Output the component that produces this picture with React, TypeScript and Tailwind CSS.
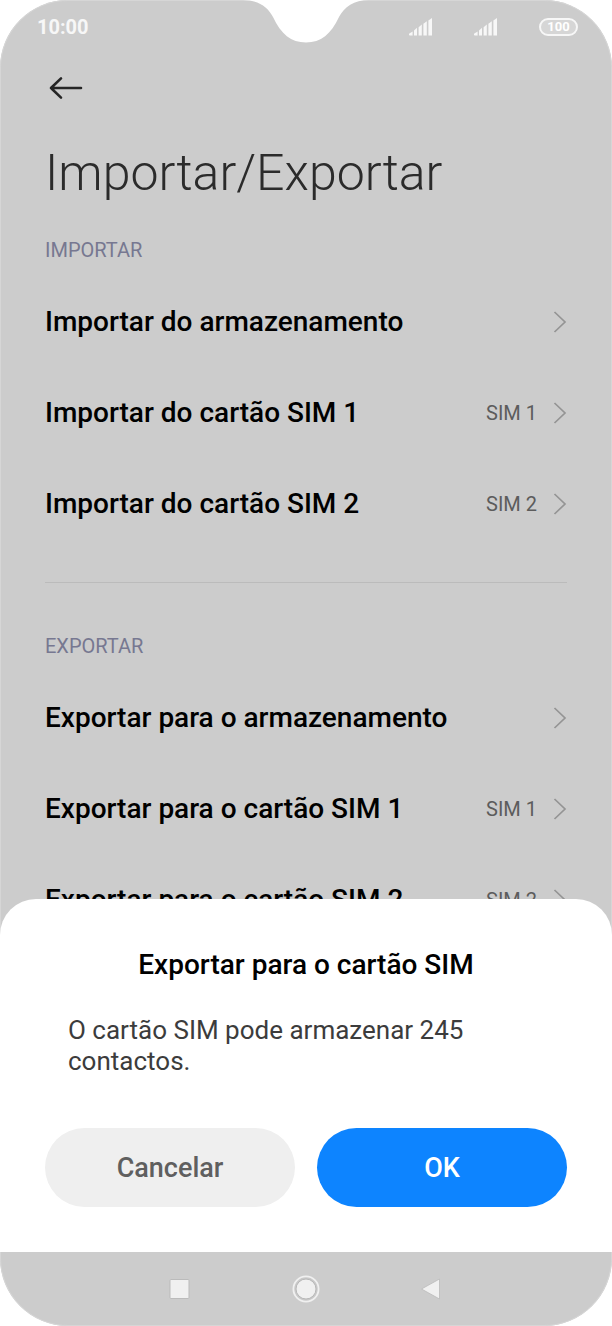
interface RowProps {
  title: string;
  value?: string;
}

const Chevron = () => (
  <svg width="14" height="22" viewBox="0 0 14 22" fill="none" stroke="#949494" strokeWidth="1.7">
    <path d="M1.5 1 L12 11 L1.5 21" />
  </svg>
);

const Row = ({ title, value }: RowProps) => {
  return (
    <li>
      <button type="button" className="flex h-[91px] w-full items-center text-left">
        <span className="grow text-[28px] leading-9 font-medium text-black">{title}</span>
        {value && <span className="mr-4 text-xl leading-6 text-[#5c5c5c]">{value}</span>}
        <Chevron />
      </button>
    </li>
  );
};

const Signal = () => (
  <svg width="24" height="18" viewBox="0 0 24 18" fill="#f7f7f7">
    <path d="M0 17 V15.8 L3.6 13.4 V17.4 H0.6 Z" />
    <path d="M5 12.4 L8 9.8 V17.4 H5 Z" />
    <path d="M9.6 9.2 L12.8 6.6 V17.4 H9.6 Z" />
    <path d="M14.4 5.8 L17.8 3.2 V17.4 H14.4 Z" />
    <path d="M19.4 2.4 L23 0 V17.4 H19.4 Z" />
  </svg>
);

const Notch = () => (
  <svg
    className="absolute top-0 left-1/2 -translate-x-1/2"
    width="126"
    height="43"
    viewBox="0 0 126 43"
    fill="white"
  >
    <path d="M0 0 C15 0 25 7 30 17 C38 34 48 42.5 63 42.5 C78 42.5 88 34 96 17 C101 7 111 0 126 0 Z" />
  </svg>
);

const StatusBar = () => {
  return (
    <header className="relative flex h-[54px] items-center justify-between pr-[34px] pl-[37px]">
      <span className="text-xl leading-6 font-bold text-[#f7f7f7]">10:00</span>
      <Notch />
      <div className="flex items-center gap-[41px]">
        <Signal />
        <Signal />
        <span className="flex h-[18px] w-[39px] items-center justify-center rounded-full border-2 border-[#f7f7f7] bg-[#d6d6d6] text-[13px] leading-[14px] font-bold text-white">
          100
        </span>
      </div>
    </header>
  );
};

const NavBar = () => {
  return (
    <nav className="flex h-[74px] items-center justify-center gap-[98px]">
      <button type="button" aria-label="Recentes">
        <svg width="28" height="28" viewBox="0 0 28 28">
          <rect x="4" y="4.5" width="19" height="19" rx="1" fill="#f0f0f0" stroke="#bbb" />
        </svg>
      </button>
      <button type="button" aria-label="Início">
        <svg width="28" height="28" viewBox="0 0 28 28">
          <circle cx="14" cy="14" r="12.6" fill="#c9c9c9" stroke="#f0f0f0" strokeWidth="1.8" />
          <circle cx="14" cy="14" r="10" fill="#f0f0f0" stroke="#b8b8b8" />
        </svg>
      </button>
      <button type="button" aria-label="Voltar">
        <svg width="28" height="28" viewBox="0 0 28 28">
          <path
            d="M3.5 14 L21.5 4 V24 Z"
            fill="#f0f0f0"
            stroke="#bbb"
            strokeWidth="0.8"
            strokeLinejoin="round"
          />
        </svg>
      </button>
    </nav>
  );
};

const ExportDialog = () => {
  return (
    <section
      role="dialog"
      aria-labelledby="dialog-title"
      className="relative -mt-[46px] rounded-t-[36px] bg-white px-[45px] pt-12 pb-[45px]"
    >
      <h2 id="dialog-title" className="text-center text-[28px] leading-9 font-medium text-black">
        Exportar para o cartão SIM
      </h2>
      <p className="mt-8 px-[23px] text-[26px] leading-[31px] text-[#3c3c3c]">
        O cartão SIM pode armazenar 245 contactos.
      </p>
      <div className="mt-[51px] flex gap-[22px]">
        <button
          type="button"
          className="h-[79px] flex-1 rounded-full bg-[#efefef] text-[27px] leading-9 font-medium text-[#5f5f5f]"
        >
          Cancelar
        </button>
        <button
          type="button"
          className="h-[79px] flex-1 rounded-full bg-[#0d84ff] text-[27px] leading-9 font-medium text-white"
        >
          OK
        </button>
      </div>
    </section>
  );
};

const App = () => {
  return (
    <div className="bg-white font-['Roboto',sans-serif]">
      <div className="overflow-hidden rounded-[68px] bg-[#ccc] shadow-[inset_0_0_0_1px_#d6d6d6]">
        <StatusBar />
        <main className="px-[45px]">
          <button type="button" aria-label="Voltar" className="mt-5 block">
            <svg
              width="40"
              height="28"
              viewBox="0 0 40 28"
              fill="none"
              stroke="#252525"
              strokeWidth="2.6"
              strokeLinecap="round"
              strokeLinejoin="round"
            >
              <path d="M36 14 H6 M16 4.4 L6 14 L16 23.6" />
            </svg>
          </button>
          <h1 className="mt-[41px] text-[50px] leading-[60px] font-light text-[#2b2b2b]">
            Importar/Exportar
          </h1>
          <h2 className="mt-[35px] text-xl leading-6 text-[#777891]">IMPORTAR</h2>
          <ul className="mt-[14px]">
            <Row title="Importar do armazenamento" />
            <Row title="Importar do cartão SIM 1" value="SIM 1" />
            <Row title="Importar do cartão SIM 2" value="SIM 2" />
          </ul>
          <hr className="mt-[33px] border-[#bbb]" />
          <h2 className="mt-[51px] text-xl leading-6 text-[#777891]">EXPORTAR</h2>
          <ul className="mt-[14px]">
            <Row title="Exportar para o armazenamento" />
            <Row title="Exportar para o cartão SIM 1" value="SIM 1" />
            <Row title="Exportar para o cartão SIM 2" value="SIM 2" />
          </ul>
        </main>
        <ExportDialog />
        <NavBar />
      </div>
    </div>
  );
};

export default App;
